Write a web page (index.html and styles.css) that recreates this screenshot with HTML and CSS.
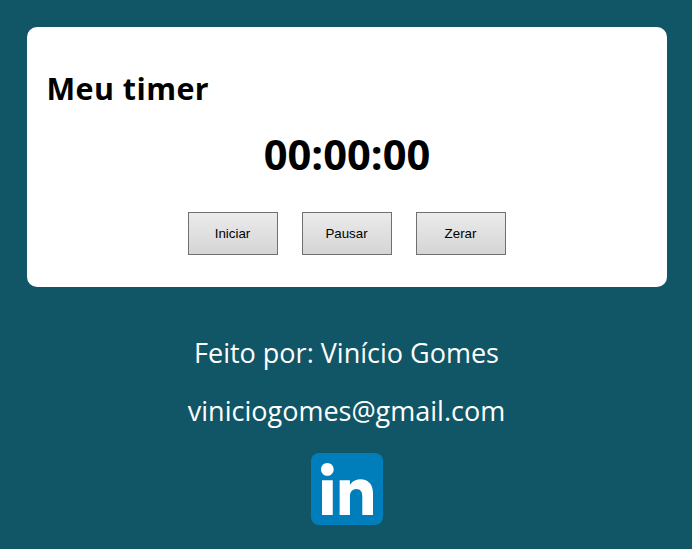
FILE: index.html
```html
<!DOCTYPE html>
<html lang="pt-BR">
<head>
<meta charset="UTF-8">
<title>Meu timer</title>
<link rel="stylesheet" href="styles.css">
</head>
<body>
<main class="container">
<h1 class="title">Meu timer</h1>
<div class="clock">00:00:00</div>
<div class="buttons">
<button class="button">Iniciar</button>
<button class="button">Pausar</button>
<button class="button">Zerar</button>
</div>
</main>
<footer class="footer">
<p class="line">Feito por: Vinício Gomes</p>
<p class="line">viniciogomes@gmail.com</p>
<svg class="logo" viewBox="0 0 72 72" role="img" aria-label="LinkedIn">
<rect width="72" height="72" rx="8" fill="#007ebb"/>
<path fill="#fff" d="M62 62H51.316V43.802c0-4.99-1.896-7.778-5.846-7.778-4.296 0-6.541 2.902-6.541 7.778V62H28.633V27.333h10.296v4.67s3.096-5.729 10.452-5.729C56.734 26.274 62 30.764 62 40.051zM16.35 22.794c-3.508 0-6.35-2.864-6.35-6.397S12.842 10 16.35 10s6.347 2.864 6.347 6.397-2.84 6.397-6.347 6.397M11.033 62h10.736V27.333H11.033z"/>
</svg>
</footer>
</body>
</html>
```
FILE: styles.css
```css
* { box-sizing: border-box; }
body {
  margin: 0;
  padding: 27px 25px 0 27px;
  background: #115666;
  font-family: "Open Sans", sans-serif;
  color: #000;
}
.container {
  height: 260px;
  padding: 40px 20px 0;
  background: #fff;
  border-radius: 10px;
}
.title {
  margin: 0 0 0 -0.5px;
  font-size: 30.4px;
  line-height: 44px;
  letter-spacing: 0.45px;
  font-weight: 700;
}
.clock {
  margin-top: 14px;
  font-size: 41.6px;
  line-height: 58px;
  font-weight: 700;
  text-align: center;
}
.buttons {
  display: flex;
  justify-content: center;
  gap: 24px;
  margin-top: 29px;
}
.button {
  width: 90px;
  height: 43px;
  padding: 0 1px 0 0;
  border: 1px solid #707070;
  background: linear-gradient(#ebebeb, #d5d5d5);
  font: 13.333px "Liberation Sans", sans-serif;
  color: #000;
}
.footer {
  margin-top: 47px;
  color: #fff;
  text-align: center;
}
.line {
  margin: 0 1px 20px 0;
  font-size: 27px;
  line-height: 38px;
}
.logo {
  display: block;
  width: 72px;
  height: 72px;
  margin: 23px auto 0;
}
```
